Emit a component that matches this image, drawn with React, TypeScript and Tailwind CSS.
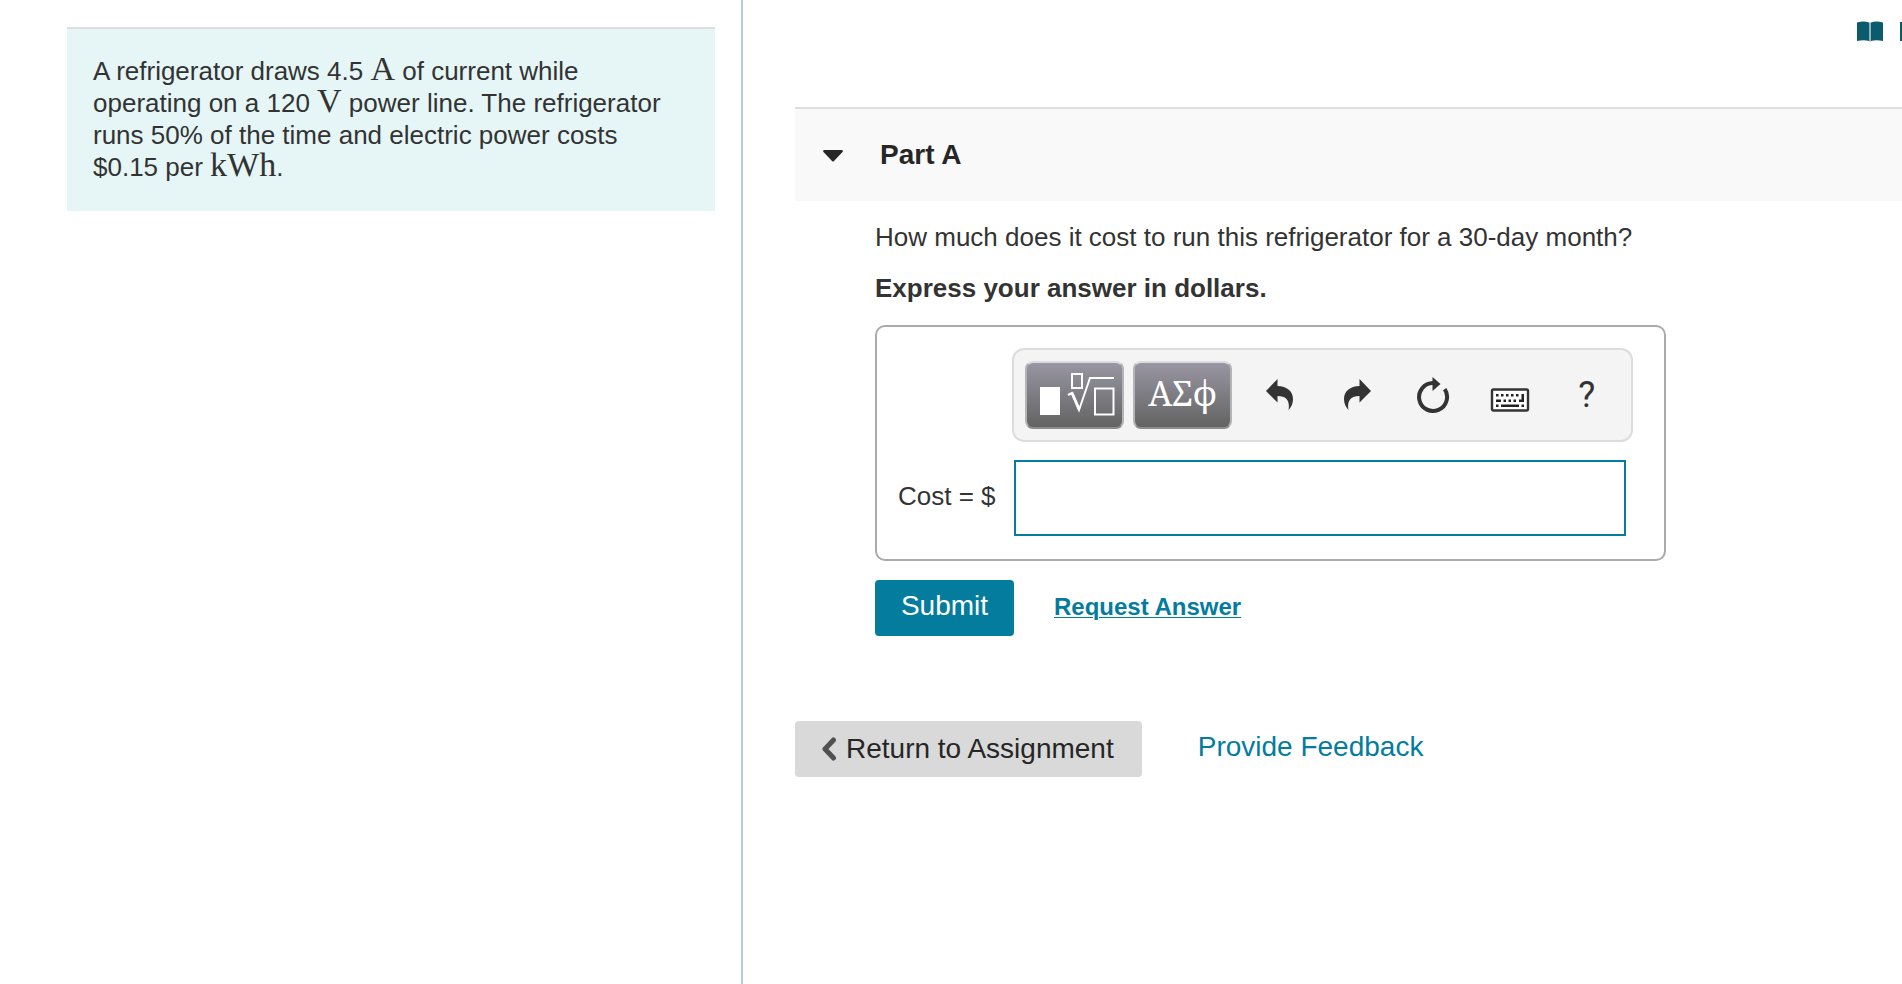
import React, { useState } from 'react';

const UndoIcon = ({ className = '' }: { className?: string }) => (
  <svg width="28" height="32" viewBox="0 0 28 32" fill="#333" className={className} aria-hidden="true">
    <path d="M0 12 L11.500 0 V7 C21 7 27 12.500 27 20 C27 24 25.500 28 22.500 31 C24 23 21.500 17 11.500 17 V23.500 Z" />
  </svg>
);

const ResetIcon = () => (
  <svg width="34" height="38" viewBox="0 0 34 38" aria-hidden="true">
    <path d="M17 7 A14 14 0 1 0 28.700 13.200" fill="none" stroke="#333" strokeWidth="4" />
    <path d="M16.500 1 L24.500 8 L16.500 15 Z" fill="#333" />
  </svg>
);

const KeyboardIcon = () => (
  <svg width="40" height="24" viewBox="0 0 40 24" aria-hidden="true">
    <rect x="2" y="1.500" width="36" height="21" rx="1.500" fill="#fff" stroke="#333" strokeWidth="2.400" />
    <g fill="#222">
      <path d="M6 6h2.500v2.500H6z M11 6h2.500v2.500H11z M16 6h2.500v2.500H16z M21 6h2.500v2.500H21z M26 6h2.500v2.500H26z" />
      <path d="M31.500 6H34v8h-5v-2.500h2.500z" />
      <path d="M6 11.500h5V14H6z M13.500 11.500H16V14h-2.500z M18.500 11.500H21V14h-2.500z M23.500 11.500H26V14h-2.500z" />
      <path d="M6 16.500h2.500V19H6z M11 16.500h18V19H11z M31.500 16.500H34V19h-2.500z" />
    </g>
  </svg>
);

const TemplateIcon = () => (
  <svg width="80" height="46" viewBox="-4 0 80 46" fill="none" stroke="#fff" aria-hidden="true">
    <rect x="1" y="15" width="20" height="28" fill="#fff" stroke="none" />
    <rect x="33" y="2" width="10" height="14" strokeWidth="2" />
    <path d="M29 23 L33 21 L40 38 L51 6 H75" strokeWidth="2" />
    <path d="M33 21 L40 37" strokeWidth="3" />
    <rect x="56" y="16.500" width="18.500" height="26" strokeWidth="2" />
  </svg>
);

const BookIcon = () => (
  <svg width="26" height="22" viewBox="0 0 26 22" aria-hidden="true">
    <path d="M0 1.500 Q7 -0.500 12 1.500 V20 Q7 18.500 0 20 Z" fill="#0b5a6e" />
    <path d="M26 1.500 Q19 -0.500 14 1.500 V20 Q19 18.500 26 20 Z" fill="#0b5a6e" />
    <path d="M12 1.500 H14 V20.500 H12 Z" fill="#8fb3bd" />
  </svg>
);

const Unit = ({ children }: { children: string }) => (
  <span className="font-['Liberation_Serif',serif] text-[34px] leading-4">{children}</span>
);

const paletteButton =
  'w-[99px] h-[68px] shrink-0 rounded-lg border-2 border-t-[#dcdcdc] border-x-[#b4b4b4] border-b-[#8c8c8c] bg-linear-to-b from-[#9996a3] to-[#636363] flex items-center justify-center text-white';
const toolButton = 'flex flex-1 items-center justify-center';

const App = () => {
  const [cost, setCost] = useState('');
  const [open, setOpen] = useState(true);

  return (
    <div className="grid grid-cols-[743fr_1159fr] min-h-screen overflow-hidden bg-white text-[#333] text-[26px] leading-8 font-['Liberation_Sans',sans-serif]">
      <aside className="min-w-0 border-r-2 border-[#b9cbdb] pl-[67px] pr-[26px] pt-[27px]">
        <p className="border-t-2 border-[#dedede] bg-[#e6f6f7] px-[26px] pt-[26px] pb-7">
          A refrigerator draws 4.5 <Unit>A</Unit> of current while operating on a 120 <Unit>V</Unit> power line. The refrigerator runs 50% of the time and electric power costs $0.15 per{' '}
          <Unit>kWh</Unit>.
        </p>
      </aside>

      <main className="min-w-0 pl-[52px]">
        <div className="flex h-[107px] justify-end gap-[17px] overflow-hidden pt-[21px]">
          <a href="#review" aria-label="Review" className="shrink-0 h-[22px]"><BookIcon /></a>
          <span className="h-[19px] w-[2px] mt-px shrink-0 bg-[#0b5a6e]" />
        </div>

        <section>
          <h2 className="border-t-2 border-[#dedede] bg-[#f9f9f9]">
            <button
              className="flex h-[92px] w-full items-center gap-[37px] pl-7 text-[28px] font-bold text-[#262626]"
              aria-expanded={open}
              onClick={() => setOpen(!open)}
            >
              <svg width="20" height="14" viewBox="0 -2 20 14" fill="#262626" aria-hidden="true">
                <path d="M1 0 H19 Q20.500 0.500 19.500 2 L11 11 Q10 12 9 11 L0.500 2 Q-0.500 0.500 1 0 Z" />
              </svg>
              Part A
            </button>
          </h2>

          {open && (
            <div className="pl-20">
              <p className="pt-5">How much does it cost to run this refrigerator for a 30-day month?</p>
              <p className="pt-[19px] font-bold">Express your answer in dollars.</p>

              <div className="mt-[21px] flex w-[791px] max-w-full flex-col rounded-[10px] border-2 border-[#aaa] pt-[21px] pb-[23px] pl-[21px] pr-[31px]">
                <div className="ml-[114px] flex h-[94px] items-center rounded-xl border-2 border-[#dcdcdc] bg-[#f4f4f4] pl-[11px]">
                  <button className={paletteButton} aria-label="Templates"><TemplateIcon /></button>
                  <button className={`${paletteButton} ml-[9px] pb-1 font-['Noto_Serif','Liberation_Serif',serif] text-[34px] leading-9`}>ΑΣϕ</button>
                  <div className="flex grow pl-[10px] pr-[6px]">
                    <button className={toolButton} aria-label="Undo"><UndoIcon /></button>
                    <button className={toolButton} aria-label="Redo"><UndoIcon className="-scale-x-100" /></button>
                    <button className={toolButton} aria-label="Reset"><ResetIcon /></button>
                    <button className={`${toolButton} pt-[10px]`} aria-label="Keyboard"><KeyboardIcon /></button>
                    <button className={`${toolButton} text-[36px] leading-9 font-['Roboto',sans-serif]`}>?</button>
                  </div>
                </div>
                <div className="mt-[18px] flex items-center">
                  <label htmlFor="cost" className="w-[116px] shrink-0 pb-1">Cost = $</label>
                  <input
                    id="cost"
                    type="text"
                    className="mr-[7px] h-[76px] min-w-0 grow border-2 border-[#047c9e] bg-white px-3 outline-none"
                    value={cost}
                    onChange={(e) => setCost(e.target.value)}
                  />
                </div>
              </div>

              <div className="mt-[19px] flex items-center gap-10">
                <button className="h-14 w-[139px] rounded-sm bg-[#047c9e] pb-1 text-[28px] text-white">Submit</button>
                <a href="#answer" className="pb-0.5 text-2xl font-bold text-[#047c9e] underline decoration-1 underline-offset-2">Request Answer</a>
              </div>
            </div>
          )}
        </section>

        <div className="mt-[85px] flex items-center gap-14">
          <button className="flex h-14 items-center gap-[9px] rounded-sm bg-[#d9d9d9] pl-[26px] pr-7 text-[28px] text-[#262626]">
            <svg width="16" height="24" viewBox="0 0 16 24" fill="none" stroke="#505050" strokeWidth="5" strokeLinecap="round" strokeLinejoin="round" aria-hidden="true">
              <path d="M12.500 3 L4 12 L12.500 21" />
            </svg>
            Return to Assignment
          </button>
          <a href="#feedback" className="pb-1 text-[28px] text-[#047c9e]">Provide Feedback</a>
        </div>
      </main>
    </div>
  );
};

export default App;
